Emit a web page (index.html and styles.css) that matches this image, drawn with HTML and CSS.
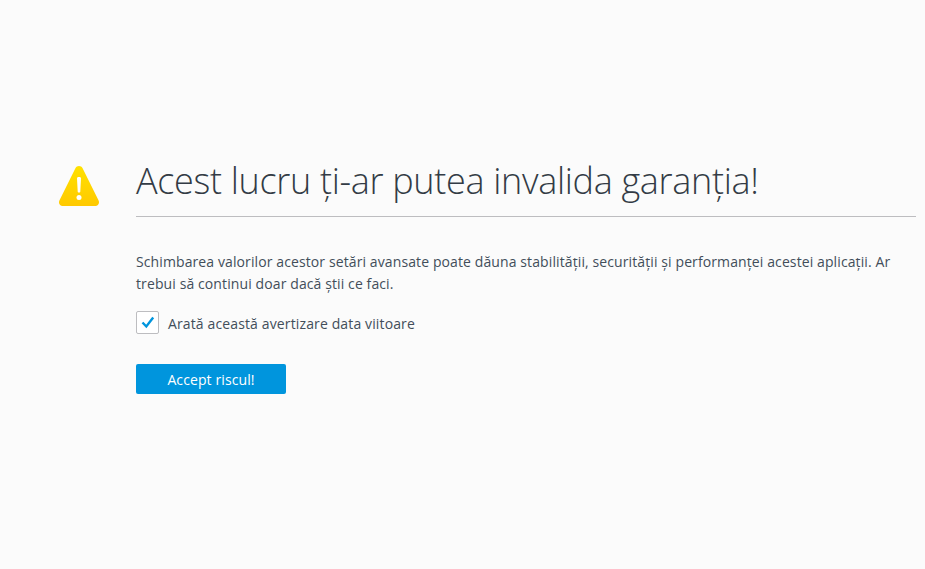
FILE: index.html
```html
<!DOCTYPE html>
<html lang="ro">
<head>
<meta charset="utf-8">
<title>Avertizare</title>
<link rel="stylesheet" href="styles.css">
</head>
<body>
<main class="page">
  <div class="icon-col">
    <svg class="warn" width="40" height="40" viewBox="0 0 40 40" aria-hidden="true">
      <defs><linearGradient id="g" x1="0" y1="0" x2="0" y2="1"><stop offset="0" stop-color="#ffe100"/><stop offset="1" stop-color="#ffc900"/></linearGradient></defs>
      <path fill="url(#g)" d="M20 0c1.500 0 2.900.8 3.600 2.200l16 32.400c.3.600.4 1.200.4 1.900 0 1.900-1.600 3.500-3.600 3.500H3.600C1.600 40 0 38.400 0 36.500c0-.7.1-1.300.4-1.900l16-32.400C17.100.8 18.500 0 20 0z"/>
      <path fill="#fff" d="M18 12.500c0-.8.600-1.500 1.400-1.500h1.200c.8 0 1.400.7 1.400 1.500l-.7 13c0 .6-.4 1-1 1h-.6c-.6 0-1-.4-1-1z"/>
      <circle cx="20" cy="31.500" r="2.500" fill="#fff"/>
    </svg>
  </div>
  <div class="content">
    <h1 class="title">Acest lucru ți-ar putea invalida garanția!</h1>
    <p class="desc">Schimbarea valorilor acestor setări avansate poate dăuna stabilității, securității și performanței acestei aplicații. Ar trebui să continui doar dacă știi ce faci.</p>
    <label class="check-row">
      <span class="box">
        <svg width="14" height="13" viewBox="0 0 14 13" aria-hidden="true"><path d="M1.500 6.500 5.300 10.500 12.200 1.500" fill="none" stroke="#0095dd" stroke-width="2.400"/></svg>
      </span>
      <span class="check-label">Arată această avertizare data viitoare</span>
    </label>
    <button class="accept" type="button">Accept riscul!</button>
  </div>
</main>
</body>
</html>
```

FILE: styles.css
```css
html, body {
  margin: 0;
  height: 100%;
  background: #fbfbfb;
}
body {
  font-family: "Open Sans", "Noto Sans", sans-serif;
  color: #424e5a;
  overflow: hidden;
}
.page {
  display: flex;
  padding: 154px 9px 0 59px;
}
.icon-col {
  width: 77px;
  flex: none;
  padding-top: 12px;
}
.warn { display: block; }
.content {
  flex: 1;
  min-width: 0;
}
.title {
  margin: 0;
  height: 62px;
  line-height: 54px;
  font-size: 36px;
  font-weight: 300;
  color: #333b45;
  border-bottom: 1px solid #bdbdc0;
  letter-spacing: -0.32px;
}
.desc {
  margin: 34px 0 0;
  font-size: 14px;
  line-height: 22px;
  letter-spacing: 0.105px;
}
.check-row {
  display: flex;
  align-items: center;
  gap: 9px;
  margin-top: 16px;
}
.box {
  width: 21px;
  height: 21px;
  border: 1px solid #bdbdc0;
  border-radius: 2px;
  background: #fff;
  display: flex;
  align-items: center;
  justify-content: center;
}
.check-label {
  font-size: 14px;
  letter-spacing: 0.13px;
  padding-top: 2px;
}
.accept {
  display: block;
  margin-top: 30px;
  width: 150px;
  height: 30px;
  border: 0;
  border-radius: 2px;
  background: #0095dd;
  color: #fff;
  font: 14px "Open Sans", "Noto Sans", sans-serif;
  letter-spacing: 0.1px;
  padding: 0;
}
```
